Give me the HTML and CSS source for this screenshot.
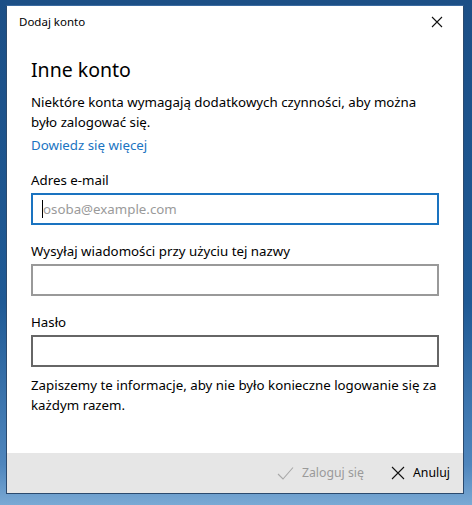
FILE: index.html
```html
<!DOCTYPE html>
<html lang="pl">
<head>
<meta charset="utf-8">
<title>Dodaj konto</title>
<link rel="stylesheet" href="styles.css">
</head>
<body>
<div class="dialog">
  <div class="titlebar">
    <span class="title">Dodaj konto</span>
    <svg class="close" width="12" height="12" viewBox="0 0 12 12"><path d="M1 1L11 11M11 1L1 11" stroke="#111" stroke-width="1.1" fill="none"/></svg>
  </div>
  <div class="content">
    <h1 class="heading">Inne konto</h1>
    <p class="text">Niektóre konta wymagają dodatkowych czynności, aby można było zalogować się.</p>
    <a class="link" href="#">Dowiedz się więcej</a>
    <label class="label">Adres e-mail</label>
    <div class="input focused"><span class="caret"></span><span class="placeholder">osoba@example.com</span></div>
    <label class="label">Wysyłaj wiadomości przy użyciu tej nazwy</label>
    <div class="input"></div>
    <label class="label">Hasło</label>
    <div class="input dark"></div>
    <p class="text note">Zapiszemy te informacje, aby nie było konieczne logowanie się za każdym razem.</p>
  </div>
  <div class="footer">
    <div class="btn disabled">
      <svg width="17" height="15" viewBox="0 0 17 15"><path d="M1 8L6 13L16 1.5" stroke="#a8a8a8" stroke-width="1.1" fill="none"/></svg>
      <span>Zaloguj się</span>
    </div>
    <div class="btn">
      <svg width="14" height="14" viewBox="0 0 14 14"><path d="M1 1L13 13M13 1L1 13" stroke="#111" stroke-width="1.1" fill="none"/></svg>
      <span>Anuluj</span>
    </div>
  </div>
</div>
</body>
</html>
```

FILE: styles.css
```css
html, body {
  margin: 0;
  padding: 0;
  height: 100%;
}
body {
  width: 472px;
  height: 505px;
  overflow: hidden;
  background: linear-gradient(180deg, #1c4f86 0%, #1f5a95 60%, #4f86bd 92%, #7aa9d4 100%);
  font-family: "Noto Sans", "Open Sans", sans-serif;
  color: #000;
}
.dialog {
  margin: 5px 0 0 6px;
  width: 458px;
  height: 489px;
  background: #fff;
  border: 1px solid #2b4a6e;
  border-top-color: #3a6aa0;
  display: flex;
  flex-direction: column;
  box-sizing: border-box;
}
.titlebar {
  height: 31px;
  display: flex;
  align-items: center;
  justify-content: space-between;
  padding: 0 20px 0 12px;
}
.title {
  font-size: 11.5px;
  line-height: 16px;
}
.close { display: block; }
.content {
  flex: 1;
  padding: 0 24px;
  display: flex;
  flex-direction: column;
}
.heading {
  margin: 19px 0 0;
  font-size: 19.5px;
  font-weight: 400;
  line-height: 28px;
}
.text {
  margin: 8px 0 0;
  font-size: 13.3px;
  line-height: 20px;
}
.link {
  margin-top: 3px;
  font-size: 13.3px;
  line-height: 20px;
  color: #1a74c2;
  text-decoration: none;
  align-self: flex-start;
}
.label {
  margin-top: 15px;
  font-size: 13.3px;
  line-height: 20px;
}
.input {
  margin-top: 3px;
  height: 32px;
  box-sizing: border-box;
  border: 2px solid #999;
  display: flex;
  align-items: center;
  padding-left: 9px;
}
.input + .label { margin-top: 16px; }
.input.focused { border-color: #1a73c0; }
.input.dark { border-color: #666; }
.caret {
  width: 1px;
  height: 18px;
  background: #000;
}
.placeholder {
  font-size: 13.3px;
  color: #9a9a9a;
}
.note { margin-top: 8px; }
.footer {
  height: 40px;
  background: #e6e6e6;
  display: flex;
  justify-content: flex-end;
  align-items: center;
  gap: 27px;
  padding-right: 13px;
}
.btn {
  display: flex;
  align-items: center;
  gap: 8px;
  font-size: 12.3px;
  line-height: 20px;
}
.btn.disabled { color: #9a9a9a; }
.btn svg { display: block; }
```
